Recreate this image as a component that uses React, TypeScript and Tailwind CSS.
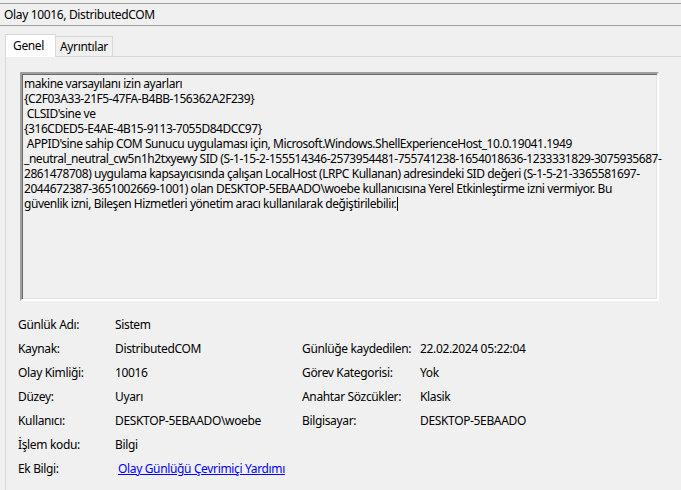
import React from 'react';

const LINES = [
  'makine varsayılanı izin ayarları',
  '{C2F03A33-21F5-47FA-B4BB-156362A2F239}',
  ' CLSID\'sine ve',
  '{316CDED5-E4AE-4B15-9113-7055D84DCC97}',
  ' APPID\'sine sahip COM Sunucu uygulaması için, Microsoft.Windows.ShellExperienceHost_10.0.19041.1949',
  '_neutral_neutral_cw5n1h2txyewy SID (S-1-15-2-155514346-2573954481-755741238-1654018636-1233331829-3075935687-',
  '2861478708) uygulama kapsayıcısında çalışan LocalHost (LRPC Kullanan) adresindeki SID değeri (S-1-5-21-3365581697-',
  '2044672387-3651002669-1001) olan DESKTOP-5EBAADO\\woebe kullanıcısına Yerel Etkinleştirme izni vermiyor. Bu',
];

const LAST_LINE = 'güvenlik izni, Bileşen Hizmetleri yönetim aracı kullanılarak değiştirilebilir.';

type Row = [string, string, string?, string?];

const ROWS: Row[] = [
  ['Günlük Adı:', 'Sistem'],
  ['Kaynak:', 'DistributedCOM', 'Günlüğe kaydedilen:', '22.02.2024 05:22:04'],
  ['Olay Kimliği:', '10016', 'Görev Kategorisi:', 'Yok'],
  ['Düzey:', 'Uyarı', 'Anahtar Sözcükler:', 'Klasik'],
  ['Kullanıcı:', 'DESKTOP-5EBAADO\\woebe', 'Bilgisayar:', 'DESKTOP-5EBAADO'],
  ['İşlem kodu:', 'Bilgi'],
];

export default function App() {
  return (
    <div className="flex h-[490px] w-[681px] flex-col overflow-hidden bg-[#f0f0f0] text-[12px] tracking-[-0.35px] text-black [font-family:'Noto_Sans',sans-serif]">
      {/* Title strip */}
      <div className="mt-[3px] flex h-[23px] items-center border-y border-[#a0a0a0] pl-[4px]">
        Olay 10016, DistributedCOM
      </div>

      {/* Tabs */}
      <div className="mt-[8px] flex items-end pl-[5px]">
        <div className="relative z-10 -mb-px flex h-[23px] w-[51px] items-start border border-b-0 border-[#d9d9d9] bg-white pl-[7px] pt-[2px]">
          Genel
        </div>
        <div className="flex h-[20px] w-[57px] items-center border border-b-0 border-l-0 border-[#d9d9d9] pl-[4px] pt-[1px]">
          Ayrıntılar
        </div>
      </div>

      {/* Panel */}
      <div className="ml-[5px] flex-1 border-l border-t border-[#d9d9d9] pl-[14px] pt-[15px]">
        <div className="h-[229px] w-[639px] border-2 border-b-white border-l-[#a0a0a0] border-r-white border-t-[#a0a0a0] px-[2px] pt-[2px] leading-[15px] tracking-[-0.45px] shadow-[inset_1px_1px_0_#696969,inset_-1px_-1px_0_#e3e3e3]">
          {LINES.map((line, i) => (
            <div key={i} className="whitespace-pre">
              {line}
            </div>
          ))}
          <div className="whitespace-pre">
            {LAST_LINE}
            <span className="ml-px inline-block h-[14px] w-px bg-black align-[-3px]" />
          </div>
        </div>

        {/* Fields */}
        <div className="mt-[12px] grid grid-cols-[95px_187px_118px_1fr]">
          {ROWS.map(([l1, v1, l2, v2], i) => (
            <React.Fragment key={i}>
              <div className="-ml-[2px] flex h-[24px] items-center">{l1}</div>
              <div className="flex h-[24px] items-center">{v1}</div>
              <div className="flex h-[24px] items-center">{l2 ?? ''}</div>
              <div className="flex h-[24px] items-center">{v2 ?? ''}</div>
            </React.Fragment>
          ))}
          <div className="-ml-[2px] flex h-[24px] items-center">Ek Bilgi:</div>
          <div className="col-span-3 flex h-[24px] items-center pl-[3px]">
            <span className="text-[#0000ff] underline">Olay Günlüğü Çevrimiçi Yardımı</span>
          </div>
        </div>
      </div>
    </div>
  );
}
